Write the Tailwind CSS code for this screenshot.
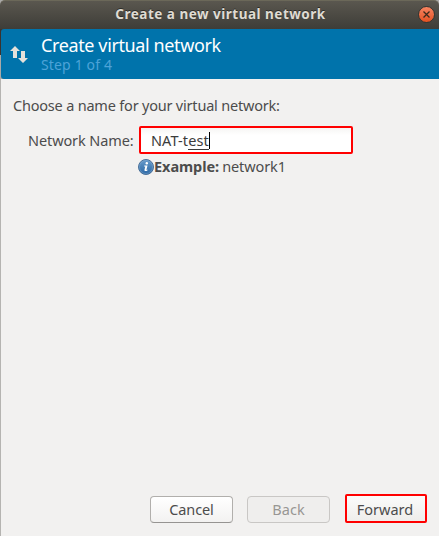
<!DOCTYPE html>
<html lang="en">
<head>
<meta charset="utf-8">
<title>Create a new virtual network</title>
<script src="https://cdn.jsdelivr.net/npm/@tailwindcss/browser@4"></script>
</head>
<body class="w-[439px] h-[536px] overflow-hidden bg-[#aaa9a7] font-['Noto_Sans',sans-serif] text-[14.5px] text-[#4c4c4c] whitespace-nowrap">
<div class="flex h-full flex-col">
  <header class="grid h-[29px] shrink-0 grid-cols-[1fr_auto_1fr] items-center rounded-t-[5px] border-t border-[#6b6859] bg-linear-to-b from-[#5a574f] to-[#3e3d38] pr-[4px] pl-[5px]">
    <span></span>
    <h1 class="pl-px text-[13.5px] leading-[27px] mb-px font-bold tracking-[0.5px] text-[#dfdbd2] [text-shadow:0_-1px_0_#2d2c28]">Create a new virtual network</h1>
    <button class="mb-px flex size-[17px] items-center justify-center justify-self-end rounded-full border border-[#353430] bg-linear-to-b from-[#f68460] to-[#e4511f]" aria-label="Close">
      <svg width="7" height="7" viewBox="0 0 7 7" fill="none" stroke="#3c2a1c" stroke-width="1.3"><path d="M.5.5l6 6M6.500.5l-6 6"/></svg>
    </button>
  </header>
  <div class="h-[50px] shrink-0 bg-linear-to-b from-[#3a332f] from-52% to-[#aaa9a7] to-52% pl-px">
  <section class="flex h-[50px] rounded-l-[3px] bg-[#0073ab] pl-[9px]">
    <svg class="mt-[17px] mr-[13px] shrink-0" width="18" height="18" viewBox="0 0 18 18" fill="#e5e1da"><path d="M5 0L10 5H7v7H3V5H0zM11 5h4v7h3L13 17l-5-5h3z"/></svg>
    <div>
      <h2 class="mt-[4px] h-[23px] text-[18px] leading-[24px] tracking-[-0.38px] text-white">Create virtual network</h2>
      <p class="leading-[18px] text-[14px] tracking-[0.15px] text-[#4da3d8]">Step 1 of 4</p>
    </div>
  </section>
  </div>
  <main class="flex grow flex-col border-l border-[#b5b4b1] bg-[#f2f1f0] pl-[12px]">
    <p class="mt-[16px] leading-[20px] tracking-[-0.2px]">Choose a name for your virtual network:</p>
    <div class="mt-[11px] flex h-[28px] items-center pl-[15px]">
      <label class="w-[111px] leading-[28px] tracking-[-0.1px]">Network Name:</label>
      <div class="flex h-[28px] w-[214px] items-center rounded-[2px] border-2 border-[#f00] bg-linear-to-b from-[#f6f5f4] to-white to-30% pl-[10px] text-[#3c3c3c]">
        <span class="leading-[20px] tracking-[0.1px]">NAT-t<span class="inline-block h-[18px] border-b border-[#3c3c3c] leading-[17px]">est</span></span><span class="h-[17px] w-px bg-black"></span>
      </div>
    </div>
    <div class="mt-[4px] flex h-[18px] items-center pl-[125px]">
      <svg class="-mt-px shrink-0" width="16" height="16" viewBox="0 0 16 16"><defs><linearGradient id="info" x2="0" y2="1"><stop stop-color="#679bcb"/><stop offset="1" stop-color="#2b67a4"/></linearGradient></defs><circle cx="8" cy="8" r="7.500" fill="url(#info)" stroke="#4a7099"/><circle cx="8" cy="8" r="6.500" fill="none" stroke="#8db4d9" stroke-opacity=".4"/><g fill="#fff"><circle cx="8.800" cy="4.300" r="1.200"/><path d="M6.300 6.500h3.200L8.400 11l1.200-.4-.2.900c-1.400.9-3.300.9-2.900-.7l.8-3.300-1.200-.1z"/></g></svg>
      <b class="tracking-[-0.05px]">Example:</b><span class="ml-[3px] tracking-[-0.1px]">network1</span>
    </div>
    <footer class="mt-auto mb-[13px] flex items-center">
      <button class="ml-[137px] h-[27px] w-[83px] rounded-[4px] border border-[#b1afac] border-b-[#969492] bg-linear-to-b from-white to-[#f3f2f1] tracking-[-0.1px]">Cancel</button>
      <button class="ml-[14px] h-[27px] w-[83px] rounded-[4px] border border-[#c9c7c5] bg-[#efeeed] text-[#989693]" disabled>Back</button>
      <button class="-mt-[2px] ml-[15px] h-[29px] w-[82px] rounded-[2px] border-2 border-[#f00] bg-linear-to-b from-[#fbfbfa] to-[#eeedeb] pt-[2px] pr-[2px]">Forward</button>
    </footer>
  </main>
</div>
</body>
</html>
